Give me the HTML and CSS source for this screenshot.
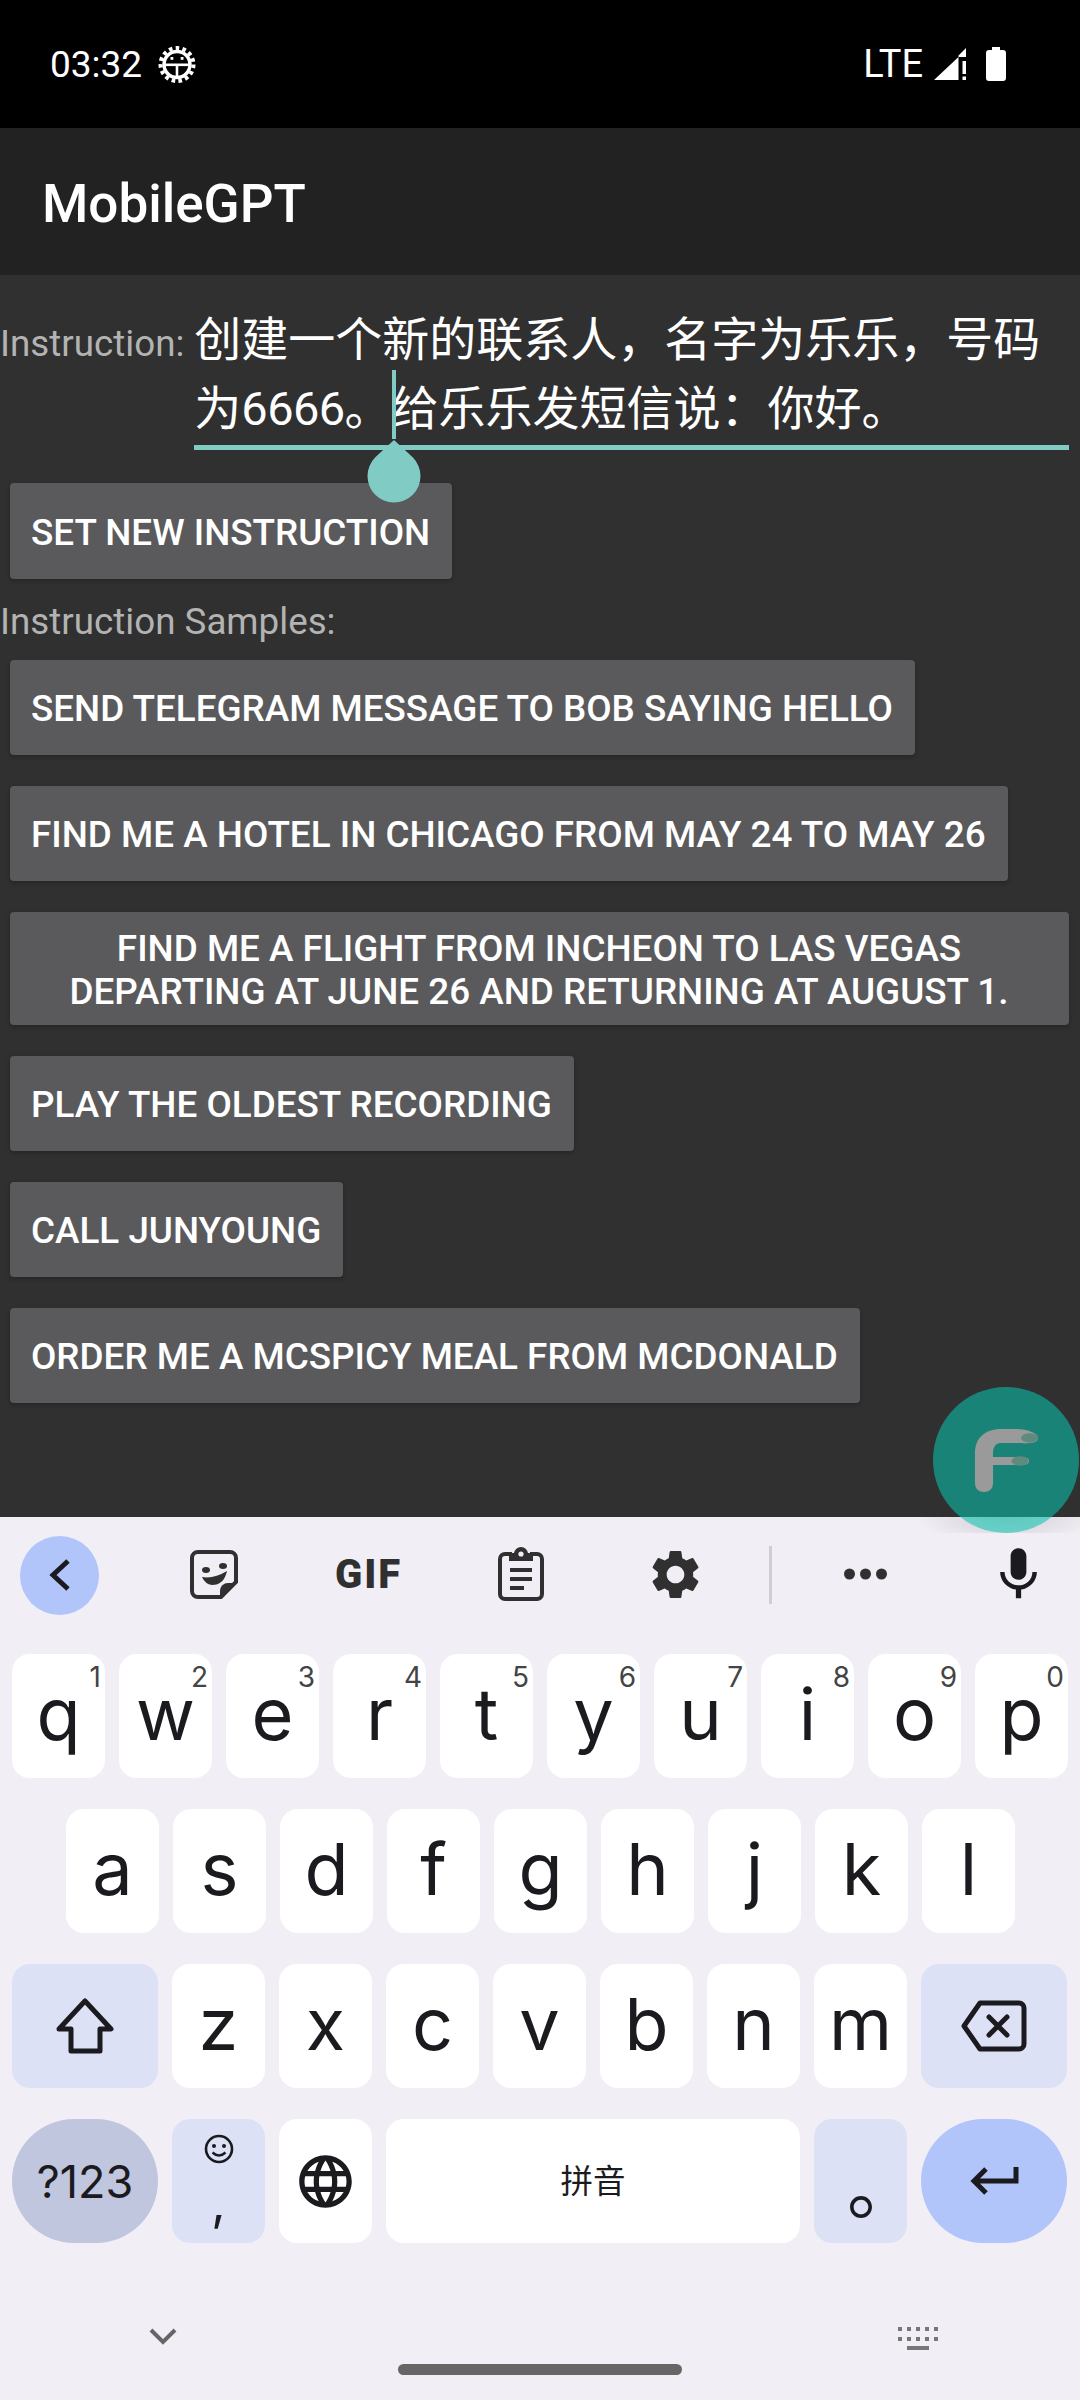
FILE: index.html
```html
<!DOCTYPE html>
<html lang="zh-CN">
<head>
    <meta charset="UTF-8">
    <meta name="viewport" content="width=device-width, initial-scale=1.0">
    <title>MobileGPT</title>
    <link rel="stylesheet" href="styles.css">
</head>
<body>
    <div class="status">
        <div class="status-left">
            <span class="time">03:32</span>
            <svg class="debug" width="38" height="37" viewBox="0 0 38 37">
                <circle cx="19" cy="18.5" r="16.5" fill="none" stroke="#fff" stroke-width="4" stroke-dasharray="3.6 3.3"/>
                <circle cx="19" cy="18.5" r="13" fill="#000" stroke="#fff" stroke-width="3.5"/>
                <rect x="6" y="17.5" width="26" height="2.6" fill="#fff"/>
                <rect x="17.7" y="19" width="2.6" height="12" fill="#fff"/>
                <rect x="12.5" y="11" width="2.8" height="2.8" fill="#fff"/>
                <rect x="22.7" y="11" width="2.8" height="2.8" fill="#fff"/>
            </svg>
        </div>
        <div class="status-right">
            <span class="lte">LTE</span>
            <svg class="signal" width="32" height="32" viewBox="0 0 32 32">
                <polygon points="0,32 24.5,32 24.5,7.5 32,0 32,9 24.5,9" fill="#fff"/>
                <rect x="28.5" y="13" width="3.5" height="13" fill="#fff"/>
                <rect x="28.5" y="28.5" width="3.5" height="3.5" fill="#fff"/>
            </svg>
            <svg class="battery" width="20" height="34" viewBox="0 0 20 34">
                <path d="M6 0h8v3h3a3 3 0 0 1 3 3v25a3 3 0 0 1-3 3H3a3 3 0 0 1-3-3V6a3 3 0 0 1 3-3h3z" fill="#fff"/>
            </svg>
        </div>
    </div>

    <div class="appbar">MobileGPT</div>

    <div class="content">
        <div class="instruction">
            <span class="label">Instruction:</span>
            <div class="field">创建一个新的联系人，名字为乐乐，号码<br>为<span class="digits">6666</span>。<span class="caret"><svg class="handle" width="54" height="63" viewBox="0 0 54 63"><path d="M27 0L45.7 17.3A26.5 26.5 0 1 1 8.3 17.3Z" fill="#80cbc4"/></svg></span>给乐乐发短信说：你好。</div>
        </div>
        <button class="btn btn-set">Set new instruction</button>
        <p class="label samples-title">Instruction Samples:</p>
        <div class="samples">
            <button class="btn">Send Telegram message to Bob saying hello</button>
            <button class="btn">Find me a hotel in Chicago from May 24 to May 26</button>
            <button class="btn btn-wide">Find me a flight from Incheon to Las Vegas<br>departing at June 26 and returning at August 1.</button>
            <button class="btn">Play the oldest recording</button>
            <button class="btn">Call Junyoung</button>
            <button class="btn">Order me a McSpicy meal from McDonald</button>
        </div>
    </div>

    <div class="keyboard">
        <div class="toolbar">
            <div class="tool-back">
                <svg width="24" height="34" viewBox="0 0 24 34"><path d="M20 3L5 17L20 31" fill="none" stroke="#1b1b1f" stroke-width="5"/></svg>
            </div>
            <svg class="tool-sticker" width="48" height="49" viewBox="0 0 48 49">
                <path d="M8 2H40a6 6 0 0 1 6 6V32L31 47H8a6 6 0 0 1-6-6V8a6 6 0 0 1 6-6z" fill="none" stroke="#303030" stroke-width="4"/>
                <path d="M46 33H38a8 8 0 0 0-8 8V48z" fill="#303030"/>
                <path d="M12 27Q24 29 37 21Q34 35 22 35Q15 34 12 27z" fill="#303030"/>
                <ellipse cx="16" cy="20" rx="4" ry="3" fill="#303030"/>
                <ellipse cx="33" cy="16" rx="4" ry="3" fill="#303030"/>
            </svg>
            <span class="tool-gif">GIF</span>
            <svg class="tool-clip" width="46" height="54" viewBox="0 0 46 54">
                <path d="M14 7H7a5 5 0 0 0-5 5V47a5 5 0 0 0 5 5H39a5 5 0 0 0 5-5V12a5 5 0 0 0-5-5H32" fill="none" stroke="#303030" stroke-width="4"/>
                <path d="M23 0a7 7 0 0 1 7 6h5v8H11V6h5a7 7 0 0 1 7-6z" fill="#303030"/>
                <circle cx="23" cy="7" r="2.6" fill="#f1eff5"/>
                <rect x="12" y="21" width="22" height="4" fill="#303030"/>
                <rect x="12" y="30" width="22" height="4" fill="#303030"/>
                <rect x="12" y="39" width="14" height="4" fill="#303030"/>
            </svg>
            <svg class="tool-gear" width="59" height="59" viewBox="0 0 24 24">
                <path fill="#303030" d="M19.14 12.94c.04-.3.06-.61.06-.94 0-.32-.02-.64-.07-.94l2.03-1.58a.49.49 0 0 0 .12-.61l-1.92-3.32a.488.488 0 0 0-.59-.22l-2.39.96c-.5-.38-1.03-.7-1.62-.94l-.36-2.54a.484.484 0 0 0-.48-.41h-3.84c-.24 0-.43.17-.47.41l-.36 2.54c-.59.24-1.13.57-1.62.94l-2.39-.96c-.22-.08-.47 0-.59.22L2.74 8.87c-.12.21-.08.47.12.61l2.03 1.58c-.05.3-.09.63-.09.94s.02.64.07.94l-2.03 1.58a.49.49 0 0 0-.12.61l1.92 3.32c.12.22.37.29.59.22l2.39-.96c.5.38 1.03.7 1.62.94l.36 2.54c.05.24.24.41.48.41h3.84c.24 0 .44-.17.47-.41l.36-2.54c.59-.24 1.13-.56 1.62-.94l2.39.96c.22.08.47 0 .59-.22l1.92-3.32c.12-.22.07-.47-.12-.61l-2.01-1.58zM12 15.6c-1.98 0-3.6-1.62-3.6-3.6s1.62-3.6 3.6-3.6 3.6 1.62 3.6 3.6-1.62 3.6-3.6 3.6z"/>
            </svg>
            <span class="tool-divider"></span>
            <svg class="tool-more" width="43" height="12" viewBox="0 0 43 12">
                <circle cx="5.5" cy="6" r="5.5" fill="#303030"/>
                <circle cx="21.5" cy="6" r="5.5" fill="#303030"/>
                <circle cx="37.5" cy="6" r="5.5" fill="#303030"/>
            </svg>
            <svg class="tool-mic" width="63" height="63" viewBox="0 0 24 24">
                <path fill="#1b1b1f" d="M12 14c1.66 0 3-1.34 3-3V5c0-1.66-1.34-3-3-3S9 3.34 9 5v6c0 1.66 1.34 3 3 3zm5.3-3c0 3-2.54 5.1-5.3 5.1S6.7 14 6.7 11H5c0 3.41 2.72 6.23 6 6.72V21h2v-3.28c3.28-.48 6-3.3 6-6.72h-1.7z"/>
            </svg>
        </div>

        <div class="keys">
            <div class="key-row">
                <div class="key">q<sup class="hint">1</sup></div>
                <div class="key">w<sup class="hint">2</sup></div>
                <div class="key">e<sup class="hint">3</sup></div>
                <div class="key">r<sup class="hint">4</sup></div>
                <div class="key">t<sup class="hint">5</sup></div>
                <div class="key">y<sup class="hint">6</sup></div>
                <div class="key">u<sup class="hint">7</sup></div>
                <div class="key">i<sup class="hint">8</sup></div>
                <div class="key">o<sup class="hint">9</sup></div>
                <div class="key">p<sup class="hint">0</sup></div>
            </div>
            <div class="key-row row-home">
                <div class="key">a</div>
                <div class="key">s</div>
                <div class="key">d</div>
                <div class="key">f</div>
                <div class="key">g</div>
                <div class="key">h</div>
                <div class="key">j</div>
                <div class="key">k</div>
                <div class="key">l</div>
            </div>
            <div class="key-row">
                <div class="key key-fn key-side key-icon">
                    <svg width="58" height="56" viewBox="0 0 58 56"><path d="M29 3L55 31H44V53H15V31H3Z" fill="none" stroke="#1b1b1f" stroke-width="5" stroke-linejoin="round"/></svg>
                </div>
                <div class="key">z</div>
                <div class="key">x</div>
                <div class="key">c</div>
                <div class="key">v</div>
                <div class="key">b</div>
                <div class="key">n</div>
                <div class="key">m</div>
                <div class="key key-fn key-side key-icon">
                    <svg width="66" height="52" viewBox="0 0 66 52">
                        <path d="M19 3H58a5 5 0 0 1 5 5V44a5 5 0 0 1-5 5H19L3 26Z" fill="none" stroke="#1b1b1f" stroke-width="5" stroke-linejoin="round"/>
                        <path d="M28 17L46 35M46 17L28 35" fill="none" stroke="#1b1b1f" stroke-width="5" stroke-linecap="round"/>
                    </svg>
                </div>
            </div>
            <div class="key-row">
                <div class="key key-side key-pill key-sym key-icon">?123</div>
                <div class="key key-fn key-comma key-icon">
                    <svg width="30" height="30" viewBox="0 0 30 30">
                        <circle cx="15" cy="15" r="13" fill="none" stroke="#1b1b1f" stroke-width="2.6"/>
                        <circle cx="10" cy="12" r="2" fill="#1b1b1f"/>
                        <circle cx="20" cy="12" r="2" fill="#1b1b1f"/>
                        <path d="M8.5 18.5Q15 24.5 21.5 18.5" fill="none" stroke="#1b1b1f" stroke-width="2.4"/>
                    </svg>
                    <span class="comma">,</span>
                </div>
                <div class="key key-icon">
                    <svg width="63" height="63" viewBox="0 0 24 24"><path fill="#1b1b1f" d="M11.99 2C6.47 2 2 6.48 2 12s4.47 10 9.99 10C17.52 22 22 17.52 22 12S17.52 2 11.99 2zm6.93 6h-2.95c-.32-1.25-.78-2.45-1.38-3.56 1.84.63 3.37 1.91 4.33 3.56zM12 4.04c.83 1.2 1.48 2.53 1.91 3.96h-3.82c.43-1.43 1.08-2.76 1.91-3.96zM4.26 14C4.1 13.36 4 12.69 4 12s.1-1.36.26-2h3.38c-.08.66-.14 1.32-.14 2s.06 1.34.14 2H4.26zm.82 2h2.95c.32 1.25.78 2.45 1.38 3.56-1.84-.63-3.37-1.9-4.33-3.56zm2.95-8H5.08c.96-1.66 2.49-2.93 4.33-3.56C8.81 5.55 8.35 6.75 8.03 8zM12 19.96c-.83-1.2-1.48-2.53-1.91-3.96h3.82c-.43 1.43-1.08 2.76-1.91 3.96zM14.34 14H9.66c-.09-.66-.16-1.32-.16-2s.07-1.35.16-2h4.68c.09.65.16 1.32.16 2s-.07 1.34-.16 2zm.25 5.56c.6-1.11 1.06-2.31 1.38-3.56h2.95c-.96 1.65-2.49 2.93-4.33 3.56zM16.36 14c.08-.66.14-1.32.14-2s-.06-1.34-.14-2h3.38c.16.64.26 1.31.26 2s-.1 1.36-.26 2h-3.38z"/></svg>
                </div>
                <div class="key key-space">拼音</div>
                <div class="key key-fn key-period key-icon">。</div>
                <div class="key key-side key-pill key-enter key-icon">
                    <svg width="50" height="32" viewBox="0 0 50 32"><path d="M47 2V16H5M17 4L5 16L17 28" fill="none" stroke="#1b1b1f" stroke-width="5"/></svg>
                </div>
            </div>
        </div>

        <div class="navbar">
            <svg class="nav-down" width="28" height="17" viewBox="0 0 28 17"><path d="M2 2L14 14L26 2" fill="none" stroke="#666" stroke-width="4"/></svg>
            <span class="nav-pill"></span>
            <svg class="nav-kbd" width="40" height="23" viewBox="0 0 40 23">
                <g fill="#777">
                    <rect x="0" y="0" width="4" height="4"/><rect x="9" y="0" width="4" height="4"/><rect x="18" y="0" width="4" height="4"/><rect x="27" y="0" width="4" height="4"/><rect x="36" y="0" width="4" height="4"/>
                    <rect x="0" y="10" width="4" height="4"/><rect x="9" y="10" width="4" height="4"/><rect x="18" y="10" width="4" height="4"/><rect x="27" y="10" width="4" height="4"/><rect x="36" y="10" width="4" height="4"/>
                    <rect x="9" y="19" width="22" height="4"/>
                </g>
            </svg>
        </div>
    </div>

    <div class="fab-shadow"></div>
    <div class="fab">
        <svg width="146" height="146" viewBox="0 0 146 146">
            <path d="M42 96V66C42 51 52 42 68 42H84C94 42 105 46 105 51C105 56 96 57 88 56H68C62 56 60 61 60 66V70H87C93 70 96 71 96 74C96 77 93 78 87 78H60V96C60 102 56 105 51 105C46 105 42 102 42 96Z" fill="#9a9a9a"/>
            <ellipse cx="96.5" cy="51" rx="8.5" ry="4.7" fill="#5f8a80"/>
            <ellipse cx="87" cy="74" rx="8.5" ry="4.7" fill="#5f8a80"/>
        </svg>
    </div>
</body>
</html>
```

FILE: styles.css
```css
* {
  box-sizing: border-box;
}

body {
  margin: 0;
  width: 1080px;
  height: 2400px;
  overflow: hidden;
  position: relative;
  display: flex;
  flex-direction: column;
  font-family: Roboto, "Noto Sans CJK SC", sans-serif;
  background-color: #303030;
}

.status {
  height: 128px;
  background-color: #000;
  color: #fff;
  display: flex;
  justify-content: space-between;
  align-items: center;
  padding: 0 74px 0 50px;
  font-size: 37px;
}

.status-left, .status-right {
  display: flex;
  align-items: center;
}

.time {
  margin-right: 16px;
}

.lte {
  margin-right: 11px;
  font-size: 38px;
}

.signal {
  margin-right: 20px;
}

.appbar {
  height: 147px;
  background-color: #222;
  color: #fff;
  font-size: 53px;
  font-weight: 500;
  line-height: 147px;
  padding: 3px 0 0 42px;
}

.content {
  height: 1242px;
  background-color: #303030;
}

.instruction {
  display: flex;
  align-items: baseline;
  padding-top: 30px;
}

.label {
  color: #b3b3b3;
  font-size: 36.75px;
  margin: 0;
}

.field {
  margin-left: 10px;
  width: 875px;
  height: 145px;
  color: #fff;
  font-size: 47px;
  line-height: 69px;
  border-bottom: 5px solid #80cbc4;
  white-space: nowrap;
}

.digits {
  letter-spacing: -0.6px;
}

.caret {
  position: relative;
  display: inline-block;
  width: 0;
  height: 0;
}

.caret::before {
  content: "";
  position: absolute;
  left: 0;
  top: -55px;
  width: 4px;
  height: 69px;
  background-color: #80cbc4;
}

.handle {
  position: absolute;
  left: -25px;
  top: 15px;
}

.btn {
  display: block;
  min-height: 95px;
  padding: 14.5px 22px 12.5px 21px;
  border: none;
  border-radius: 4px;
  background-color: #5a5a5c;
  color: #fff;
  font-family: Roboto, sans-serif;
  font-size: 36.85px;
  font-weight: 500;
  line-height: 43px;
  text-transform: uppercase;
  text-align: center;
  box-shadow: 0 2px 4px rgba(0, 0, 0, 0.25);
}

.btn-set {
  margin: 33px 0 0 10px;
  min-height: 96px;
}

.samples-title {
  margin-top: 22px;
  height: 59px;
  line-height: 42px;
}

.samples {
  display: flex;
  flex-direction: column;
  align-items: flex-start;
  gap: 31px;
  padding: 0 11px 0 10px;
}

.btn-wide {
  align-self: stretch;
}

.keyboard {
  height: 883px;
  background-color: #f1eff5;
}

.toolbar {
  height: 137px;
  display: flex;
  align-items: center;
  padding: 0 0 23px 20px;
}

.tool-back {
  width: 79px;
  height: 79px;
  border-radius: 50%;
  background-color: #b1c5fb;
  display: flex;
  align-items: center;
  justify-content: center;
  margin-top: 2px;
}

.tool-sticker {
  margin-left: 91px;
}

.tool-gif {
  margin-left: 97px;
  font-size: 40px;
  font-weight: 900;
  letter-spacing: 2px;
  color: #303030;
  width: 66px;
}

.tool-clip {
  margin-left: 97px;
}

.tool-gear {
  margin-left: 102px;
}

.tool-divider {
  margin-left: 64px;
  width: 3px;
  height: 58px;
  background-color: #cfcfd3;
  margin-top: 2px;
}

.tool-more {
  margin-left: 72px;
}

.tool-mic {
  margin-left: 100px;
}

.keys {
  display: flex;
  flex-direction: column;
  gap: 31px;
  padding: 0 12px;
}

.key-row {
  display: flex;
  gap: 14px;
  height: 124px;
}

.row-home {
  padding-left: 54px;
}

.key {
  position: relative;
  width: 93px;
  height: 124px;
  padding-bottom: 5px;
  border-radius: 18px;
  background-color: #fff;
  color: #1b1b1f;
  font-family: Inter, sans-serif;
  font-size: 72px;
  font-weight: 400;
  display: flex;
  align-items: center;
  justify-content: center;
}

.key-icon {
  padding-bottom: 0;
}

.hint {
  position: absolute;
  top: 7px;
  right: 4px;
  font-size: 28px;
  line-height: 32px;
  color: #444;
  vertical-align: baseline;
}

.key-fn {
  background-color: #dde1f6;
}

.key-side {
  width: 146px;
}

.key-pill {
  border-radius: 62px;
}

.key-sym {
  background-color: #bfc6de;
  font-size: 45px;
}

.key-enter {
  background-color: #b1c5fb;
}

.key-comma {
  flex-direction: column;
  justify-content: flex-start;
  padding-top: 15px;
}

.comma {
  font-size: 50px;
  line-height: 52px;
  margin-top: 12px;
}

.key-space {
  width: 414px;
  font-size: 32.5px;
  font-family: "Noto Sans CJK SC", sans-serif;
}

.key-period {
  font-family: "Noto Sans CJK SC", sans-serif;
  font-size: 72px;
  padding-left: 45px;
}

.navbar {
  position: relative;
  height: 0;
}

.nav-down {
  position: absolute;
  left: 149px;
  top: 85px;
}

.nav-pill {
  position: absolute;
  left: 398px;
  top: 121px;
  width: 284px;
  height: 11px;
  border-radius: 6px;
  background-color: #666;
}

.nav-kbd {
  position: absolute;
  left: 898px;
  top: 84px;
}

.fab {
  position: absolute;
  left: 933px;
  top: 1387px;
  width: 146px;
  height: 146px;
  border-radius: 50%;
  background-color: rgba(11, 195, 175, 0.57);
}

.fab-shadow {
  position: absolute;
  left: 900px;
  top: 1517px;
  width: 180px;
  height: 16px;
  background: radial-gradient(ellipse 90px 28px at 106px 0, rgba(0, 0, 0, 0.14), rgba(0, 0, 0, 0));
}
```
